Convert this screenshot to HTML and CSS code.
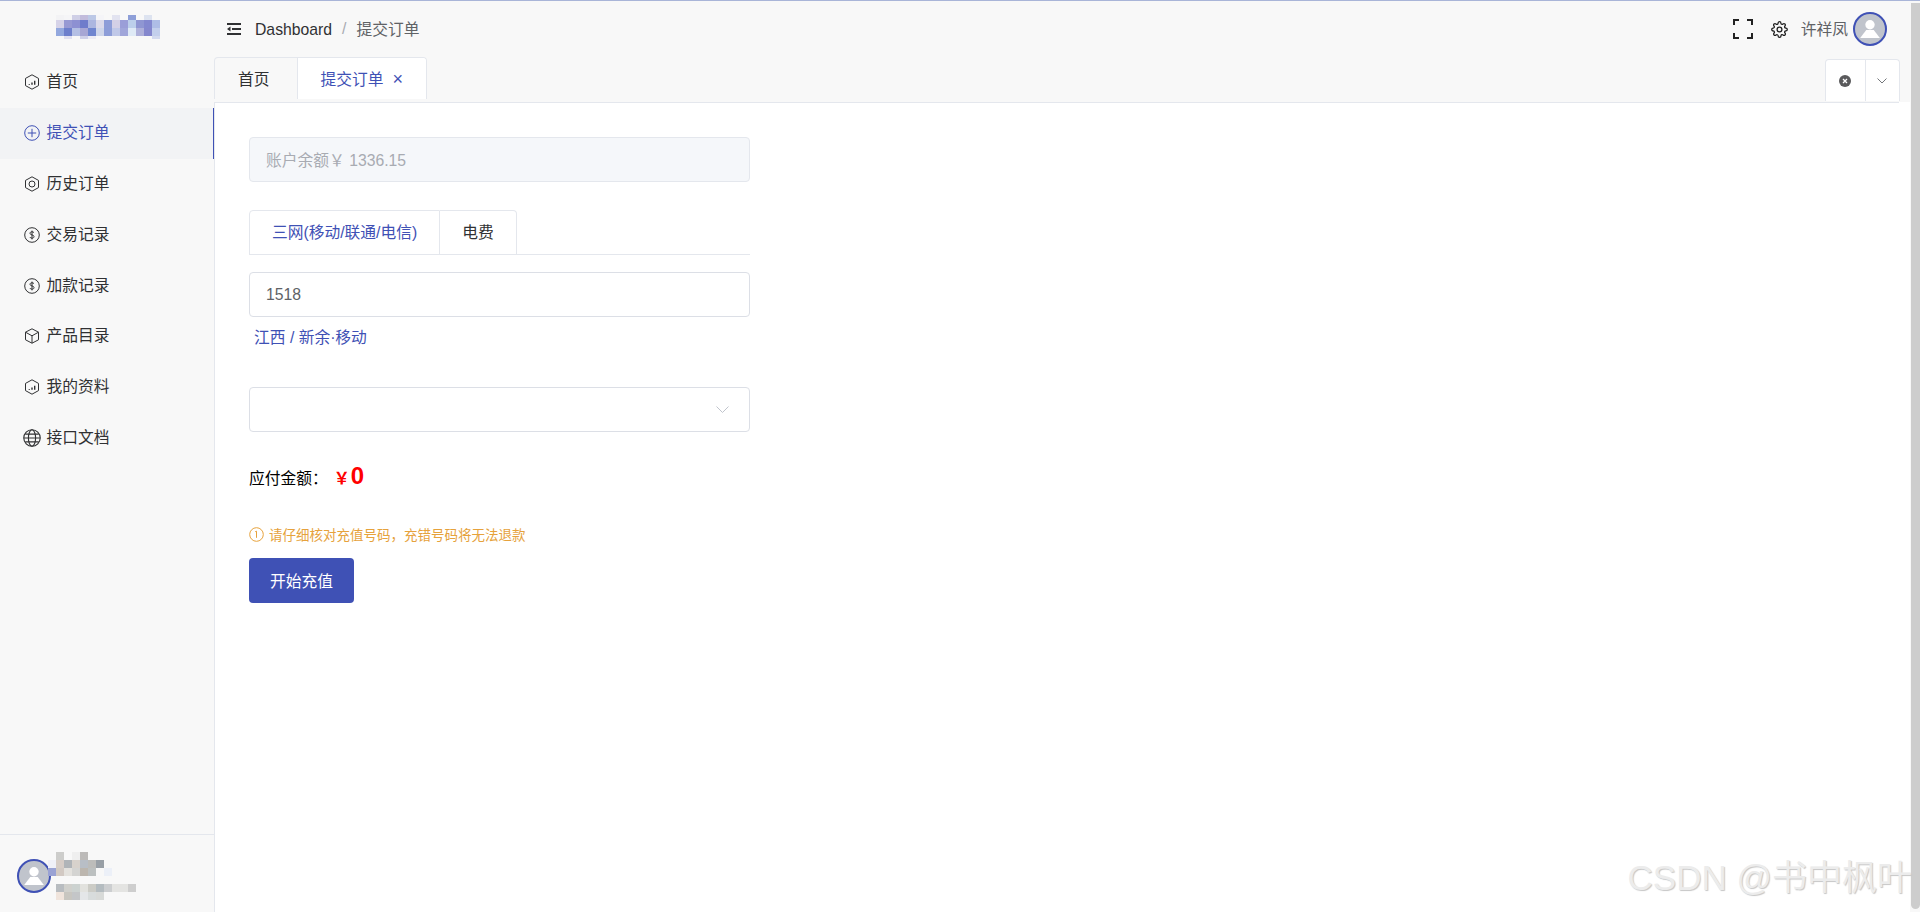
FILE: index.html
```html
<!DOCTYPE html>
<html lang="zh-CN">
<head>
  <meta charset="UTF-8" />
  <meta name="viewport" content="width=device-width, initial-scale=1.0" />
  <title>提交订单</title>
  <link rel="stylesheet" href="styles.css">
</head>
<body>
  <div class="layout">
    <!-- Sidebar -->
    <aside class="sidebar">
      <div class="logo">
        <svg width="104" height="24" viewBox="0 0 104 24">
          <rect x="0" y="0" width="8" height="5" fill="#f3f3f5"/><rect x="8" y="0" width="8" height="5" fill="#f5f5f7"/><rect x="16" y="0" width="8" height="5" fill="#cfcfe6"/><rect x="24" y="0" width="8" height="5" fill="#c2bcdc"/><rect x="32" y="0" width="8" height="5" fill="#bcc8e6"/><rect x="40" y="0" width="8" height="5" fill="#f5f5f8"/><rect x="56" y="0" width="8" height="5" fill="#e2e3f0"/><rect x="72" y="0" width="8" height="5" fill="#8e9fd8"/><rect x="88" y="0" width="8" height="5" fill="#dde3f0"/>
          <rect x="0" y="5" width="8" height="8" fill="#d6d3e8"/><rect x="8" y="5" width="8" height="8" fill="#9799d3"/><rect x="16" y="5" width="8" height="8" fill="#8d90d2"/><rect x="24" y="5" width="8" height="8" fill="#6f7ccb"/><rect x="32" y="5" width="8" height="8" fill="#acb6e0"/><rect x="40" y="5" width="8" height="8" fill="#dcdaea"/><rect x="48" y="5" width="8" height="8" fill="#8e9dd8"/><rect x="56" y="5" width="8" height="8" fill="#d4d0e6"/><rect x="64" y="5" width="8" height="8" fill="#9a9ed8"/><rect x="72" y="5" width="8" height="8" fill="#bccfeb"/><rect x="80" y="5" width="8" height="8" fill="#8f96d2"/><rect x="88" y="5" width="8" height="8" fill="#8388cf"/><rect x="96" y="5" width="8" height="8" fill="#aebde6"/>
          <rect x="0" y="13" width="8" height="8" fill="#93a8de"/><rect x="8" y="13" width="8" height="8" fill="#6d7fcc"/><rect x="16" y="13" width="8" height="8" fill="#b4bfe4"/><rect x="24" y="13" width="8" height="8" fill="#a7a6d4"/><rect x="32" y="13" width="8" height="8" fill="#6f85cf"/><rect x="40" y="13" width="8" height="8" fill="#cfd6ea"/><rect x="48" y="13" width="8" height="8" fill="#8d9dd8"/><rect x="56" y="13" width="8" height="8" fill="#c0c8e8"/><rect x="64" y="13" width="8" height="8" fill="#a0a6da"/><rect x="72" y="13" width="8" height="8" fill="#dfeaf6"/><rect x="80" y="13" width="8" height="8" fill="#aeb0da"/><rect x="88" y="13" width="8" height="8" fill="#8487cd"/><rect x="96" y="13" width="8" height="8" fill="#c3cfec"/>
          <rect x="8" y="21" width="8" height="3" fill="#e0e0f0"/><rect x="24" y="21" width="8" height="3" fill="#cfd0e8"/><rect x="32" y="21" width="8" height="3" fill="#ecebf4"/><rect x="96" y="21" width="8" height="3" fill="#d3daef"/>
        </svg>
      </div>

      <nav class="menu">
        <a class="menu-item">
          <svg class="menu-icon" viewBox="0 0 16 16"><path d="M8 .8 14.500 4.400v7.200L8 15.200 1.500 11.600V4.400z"/><path class="bars" d="M5.300 10.800v-.8M8 10.800V8.400M10.700 10.800V6.800"/></svg>
          <span>首页</span>
        </a>
        <a class="menu-item active">
          <svg class="menu-icon" viewBox="0 0 16 16"><circle cx="8" cy="8" r="7.300"/><path d="M8 3.800v8.400M3.800 8h8.400"/></svg>
          <span>提交订单</span>
        </a>
        <a class="menu-item">
          <svg class="menu-icon" viewBox="0 0 16 16"><path d="M8 .8 14.500 4.400v7.200L8 15.200 1.500 11.600V4.400z"/><circle cx="8" cy="8" r="3"/></svg>
          <span>历史订单</span>
        </a>
        <a class="menu-item">
          <svg class="menu-icon" viewBox="0 0 16 16"><circle cx="8" cy="8" r="7.300"/><path d="M10 5.800C9.600 5 8.900 4.800 8 4.800c-1.100 0-2 .5-2 1.500 0 2.200 4 1 4 3.300 0 1-.9 1.600-2 1.600-1 0-1.700-.3-2.100-1.100M8 3.600v8.800"/></svg>
          <span>交易记录</span>
        </a>
        <a class="menu-item">
          <svg class="menu-icon" viewBox="0 0 16 16"><circle cx="8" cy="8" r="7.300"/><path d="M10 5.800C9.600 5 8.900 4.800 8 4.800c-1.100 0-2 .5-2 1.500 0 2.200 4 1 4 3.300 0 1-.9 1.600-2 1.600-1 0-1.700-.3-2.100-1.100M8 3.600v8.800"/></svg>
          <span>加款记录</span>
        </a>
        <a class="menu-item">
          <svg class="menu-icon" viewBox="0 0 16 16"><path d="M8 .8 14.500 4.200v7.600L8 15.200 1.500 11.800V4.200z"/><path d="M1.500 4.200 8 7.800l6.500-3.600M8 7.800v7.400"/></svg>
          <span>产品目录</span>
        </a>
        <a class="menu-item">
          <svg class="menu-icon" viewBox="0 0 16 16"><path d="M8 .8 14.500 4.400v7.200L8 15.200 1.500 11.600V4.400z"/><path class="bars" d="M5.300 10.800v-.8M8 10.800V8.400M10.700 10.800V6.800"/></svg>
          <span>我的资料</span>
        </a>
        <a class="menu-item">
          <svg class="menu-icon globe" viewBox="0 0 16 16"><circle cx="8" cy="8" r="7.300"/><ellipse cx="8" cy="8" rx="3.200" ry="7.300"/><path d="M.7 8h14.600M2 4.600h12M2 11.400h12"/></svg>
          <span>接口文档</span>
        </a>
      </nav>

      <div class="user-box">
        <div class="avatar">
          <svg viewBox="0 0 32 32"><circle cx="16" cy="11.500" r="5"/><path d="M12 17h8l6.500 8.500h-21z"/></svg>
        </div>
        <svg class="user-blur" width="88" height="48" viewBox="0 0 88 48">
          <rect x="8" y="0" width="8" height="8" fill="#cdcdcb"/><rect x="24" y="0" width="8" height="8" fill="#efefef"/><rect x="32" y="0" width="8" height="8" fill="#bcbab8"/>
          <rect x="0" y="8" width="8" height="8" fill="#f0f0f8"/><rect x="8" y="8" width="8" height="8" fill="#d6ccc6"/><rect x="16" y="8" width="8" height="8" fill="#b0b4b8"/><rect x="24" y="8" width="8" height="8" fill="#d8d2cc"/><rect x="32" y="8" width="8" height="8" fill="#b8bec6"/><rect x="40" y="8" width="8" height="8" fill="#bcbcba"/><rect x="48" y="8" width="8" height="8" fill="#989fa6"/>
          <rect x="0" y="16" width="8" height="8" fill="#9aa2d4"/><rect x="8" y="16" width="8" height="8" fill="#d2c9c3"/><rect x="16" y="16" width="8" height="8" fill="#e4e2de"/><rect x="24" y="16" width="8" height="8" fill="#d4d4d2"/><rect x="32" y="16" width="8" height="8" fill="#bcb6ae"/><rect x="40" y="16" width="8" height="8" fill="#bcc0c0"/><rect x="56" y="16" width="8" height="8" fill="#ecf0f8"/>
          <rect x="8" y="32" width="8" height="8" fill="#b8bcc0"/><rect x="16" y="32" width="8" height="8" fill="#d0d0cc"/><rect x="24" y="32" width="8" height="8" fill="#ccd2d0"/><rect x="32" y="32" width="8" height="8" fill="#e2e2de"/><rect x="40" y="32" width="8" height="8" fill="#ccccc6"/><rect x="48" y="32" width="8" height="8" fill="#b4bcc0"/><rect x="56" y="32" width="8" height="8" fill="#ccced0"/><rect x="64" y="32" width="8" height="8" fill="#e4e4e2"/><rect x="72" y="32" width="8" height="8" fill="#e4e4e2"/><rect x="80" y="32" width="8" height="8" fill="#cecece"/>
          <rect x="8" y="40" width="8" height="8" fill="#f0e4dc"/><rect x="16" y="40" width="8" height="8" fill="#c8c6c0"/><rect x="24" y="40" width="8" height="8" fill="#c4c6c8"/><rect x="32" y="40" width="8" height="8" fill="#e4e6e8"/><rect x="40" y="40" width="8" height="8" fill="#d8dcdc"/><rect x="48" y="40" width="8" height="8" fill="#d8dad8"/>
        </svg>
      </div>
    </aside>

    <main class="main">
      <!-- Top bar -->
      <header class="topbar">
        <div class="crumbs">
          <svg class="fold-icon" width="14" height="12" viewBox="0 0 14 12"><path d="M0 1h14M5 6h9M0 11h14"/><path class="fold-arrow" d="M3.500 3.600 0 6l3.500 2.400z"/></svg>
          <span class="crumb-first">Dashboard</span>
          <span class="crumb-sep">/</span>
          <span class="crumb-last">提交订单</span>
        </div>
        <div class="top-tools">
          <svg class="tool-full" width="20" height="20" viewBox="0 0 20 20"><path d="M1 6V1h5M14 1h5v5M19 14v5h-5M6 19H1v-5"/></svg>
          <svg class="tool-gear" width="17" height="17" viewBox="0 0 24 24"><circle cx="12" cy="12" r="3.400"/><path d="M19.400 15a1.650 1.650 0 0 0 .33 1.820l.06.06a2 2 0 0 1 0 2.830 2 2 0 0 1-2.830 0l-.06-.06a1.650 1.650 0 0 0-1.820-.33 1.650 1.650 0 0 0-1 1.510V21a2 2 0 0 1-2 2 2 2 0 0 1-2-2v-.09A1.650 1.650 0 0 0 9 19.400a1.650 1.650 0 0 0-1.820.33l-.06.06a2 2 0 0 1-2.830 0 2 2 0 0 1 0-2.830l.06-.06a1.650 1.650 0 0 0 .33-1.820 1.650 1.650 0 0 0-1.510-1H3a2 2 0 0 1-2-2 2 2 0 0 1 2-2h.09A1.650 1.650 0 0 0 4.600 9a1.650 1.650 0 0 0-.33-1.820l-.06-.06a2 2 0 0 1 0-2.830 2 2 0 0 1 2.830 0l.06.06a1.650 1.650 0 0 0 1.820.33H9a1.650 1.650 0 0 0 1-1.510V3a2 2 0 0 1 2-2 2 2 0 0 1 2 2v.09a1.650 1.650 0 0 0 1 1.510 1.650 1.650 0 0 0 1.820-.33l.06-.06a2 2 0 0 1 2.830 0 2 2 0 0 1 0 2.830l-.06.06a1.650 1.650 0 0 0-.33 1.820V9a1.650 1.650 0 0 0 1.510 1H21a2 2 0 0 1 2 2 2 2 0 0 1-2 2h-.09a1.650 1.650 0 0 0-1.510 1z"/></svg>
          <span class="top-name">许祥凤</span>
          <div class="avatar">
            <svg viewBox="0 0 32 32"><circle cx="16" cy="11.500" r="5"/><path d="M12 17h8l6.500 8.500h-21z"/></svg>
          </div>
        </div>
      </header>

      <!-- Page tabs -->
      <div class="page-tabs">
        <div class="tab-list">
          <div class="page-tab">首页</div>
          <div class="page-tab current">提交订单<span class="tab-close">×</span></div>
        </div>
        <div class="tab-actions">
          <div class="tab-action">
            <svg width="12" height="12" viewBox="0 0 12 12"><circle cx="6" cy="6" r="6" fill="#5a5a5c"/><path d="M4 4l4 4M8 4l-4 4" stroke="#fff" stroke-width="1.300"/></svg>
          </div>
          <div class="tab-action">
            <svg width="10" height="6" viewBox="0 0 10 6"><path d="M.5.5 5 5 9.500.5" fill="none" stroke="#73767a"/></svg>
          </div>
        </div>
      </div>

      <!-- Order form -->
      <section class="content">
        <div class="order-form">
          <input class="field balance" type="text" value="账户余额￥ 1336.15" disabled>

          <div class="type-tabs">
            <div class="type-tab selected">三网(移动/联通/电信)</div>
            <div class="type-tab">电费</div>
          </div>

          <input class="field phone" type="text" value="1518">
          <p class="location">江西 / 新余·移动</p>

          <div class="field select">
            <svg width="13" height="7" viewBox="0 0 13 7"><path d="M.5.5 6.500 6.500l6-6" fill="none" stroke="#c0c4cc"/></svg>
          </div>

          <div class="amount">
            <span>应付金额：</span>
            <span class="price"><small>￥</small>0</span>
          </div>

          <p class="notice">
            <svg width="15" height="15" viewBox="0 0 15 15"><circle cx="7.500" cy="7.500" r="6.800"/><path d="M6.200 4.700 7.500 4.200v6.600"/></svg>
            请仔细核对充值号码，充错号码将无法退款
          </p>

          <button class="submit-btn">开始充值</button>
        </div>
      </section>
    </main>

    <div class="scrollbar"><div class="scroll-thumb"></div></div>
  </div>

  <div class="watermark">CSDN @书中枫叶</div>
</body>
</html>
```

FILE: styles.css
```css
* {
  box-sizing: border-box;
}
html, body {
  height: 100%;
}
body {
  margin: 0;
  overflow: hidden;
  background: #f8f8f8;
  border-top: 1px solid #a9b5d8;
  font-family: "Liberation Sans", "Noto Sans CJK SC", sans-serif;
  font-size: 15.75px;
  color: #303133;
}
.layout {
  display: flex;
  height: 100%;
}

/* sidebar */
.sidebar {
  width: 214px;
  flex-shrink: 0;
  display: flex;
  flex-direction: column;
}
.logo {
  height: 56px;
  padding: 14px 0 0 56px;
}
.logo svg {
  display: block;
}
.menu-item {
  height: 50.8px;
  display: flex;
  align-items: center;
  gap: 7px;
  padding-left: 23.5px;
  color: #303133;
}
.menu-item span {
  margin-top: -3px;
}
.menu-item.active {
  background: #f2f3f5;
  border-right: 1px solid #3f51b5;
  color: #3f51b5;
}
.menu-icon {
  width: 16px;
  height: 16px;
  fill: none;
  stroke: currentColor;
  stroke-width: 1;
}
.menu-icon .bars {
  stroke-width: 1.4;
}
.menu-icon.globe {
  width: 18px;
  height: 18px;
  margin: 0 -1px;
}
.user-box {
  margin-top: auto;
  height: 78px;
  border-top: 1px solid #e4e7ed;
  display: flex;
  align-items: flex-start;
  padding: 24px 0 0 17px;
}
.user-box .avatar {
  flex-shrink: 0;
}
.user-blur {
  margin: -7px 0 0 -3px;
}
.avatar {
  width: 34px;
  height: 34px;
  border: 2px solid #3f51b5;
  border-radius: 50%;
  background: #c0c4cc;
  overflow: hidden;
}
.avatar svg {
  display: block;
  width: 100%;
  height: 100%;
  fill: #fff;
}

/* top bar */
.main {
  flex: 1;
  min-width: 0;
  display: flex;
  flex-direction: column;
}
.topbar {
  height: 56px;
  flex-shrink: 0;
  display: flex;
  justify-content: space-between;
  align-items: center;
  padding: 0 24px 0 13px;
}
.crumbs {
  display: flex;
  align-items: center;
}
.fold-icon {
  stroke: #303133;
  stroke-width: 2;
  margin-right: 14px;
}
.fold-arrow {
  fill: #303133;
  stroke: none;
}
.crumb-first {
  margin-top: 1px;
}
.crumb-sep {
  margin: -1px 10px 0;
  color: #a8abb2;
}
.crumb-last {
  margin-top: -2px;
  color: #606266;
}
.top-tools {
  display: flex;
  align-items: center;
}
.tool-full {
  fill: none;
  stroke: #222;
  stroke-width: 2;
  margin-right: 18px;
}
.tool-gear {
  fill: none;
  stroke: #222;
  stroke-width: 1.8;
  margin-right: 13px;
}
.top-name {
  margin-top: -2px;
  color: #606266;
  margin-right: 5px;
}

/* page tabs */
.page-tabs {
  height: 45px;
  flex-shrink: 0;
  display: flex;
  justify-content: space-between;
  align-items: flex-start;
  margin-right: 11px;
}
.tab-list {
  display: flex;
  height: 42px;
  border: 1px solid #e4e7ed;
  border-bottom: none;
  border-radius: 4px 4px 0 0;
  overflow: hidden;
}
.page-tab {
  padding: 0 23px;
  line-height: 43px;
  color: #303133;
}
.page-tab:first-child {
  padding-right: 27px;
}
.page-tab.current {
  background: #fff;
  border-left: 1px solid #e4e7ed;
  color: #3f51b5;
}
.tab-close {
  margin-left: 9px;
  font-size: 18px;
}
.tab-actions {
  display: flex;
  height: 42px;
  margin-top: 2px;
  background: #fff;
  border: 1px solid #e4e7ed;
  border-bottom: none;
  border-radius: 4px 4px 0 0;
}
.tab-action {
  width: 39px;
  padding-right: 2px;
  display: flex;
  justify-content: center;
  align-items: center;
}
.tab-action + .tab-action {
  width: 34px;
  border-left: 1px solid #e4e7ed;
}

/* form */
.content {
  flex: 1;
  background: #fff;
  border: 1px solid #e4e7ed;
  border-bottom: none;
  margin-right: 11px;
  padding: 34px;
  position: relative;
}
.content::after {
  content: "";
  position: absolute;
  top: -1px;
  bottom: 0;
  left: 100%;
  width: 11px;
  background: #fff;
}
.order-form {
  width: 501px;
  display: flex;
  flex-direction: column;
}
.field {
  display: block;
  width: 100%;
  height: 45px;
  padding: 0 16px;
  border: 1px solid #dcdfe6;
  border-radius: 4px;
  background: #fff;
  font: inherit;
  color: #606266;
  outline: none;
}
.balance {
  background: #f5f7fa;
  border-color: #e4e7ed;
  color: #a8abb2;
}
.type-tabs {
  display: flex;
  height: 45px;
  margin-top: 28px;
  border-bottom: 1px solid #e4e7ed;
}
.type-tab {
  height: 45px;
  padding: 0 22px;
  line-height: 43px;
  border: 1px solid #e4e7ed;
  border-left: none;
  color: #303133;
}
.type-tab:first-child {
  border-left: 1px solid #e4e7ed;
  border-radius: 4px 0 0 0;
}
.type-tab:last-child {
  border-radius: 0 4px 0 0;
}
.type-tab.selected {
  color: #3f51b5;
  border-bottom-color: #e4e7ed;
}
.phone {
  margin-top: 17px;
}
.location {
  margin: 10px 0 0;
  padding-left: 5px;
  line-height: 22px;
  color: #3f51b5;
}
.select {
  margin-top: 38px;
  display: flex;
  justify-content: flex-end;
  align-items: center;
  padding-right: 20px;
}
.amount {
  margin-top: 31px;
  height: 28px;
  display: flex;
  align-items: center;
  color: #000;
}
.price {
  color: #f00;
  font-weight: 700;
  font-size: 24px;
  margin: -2px 0 0 6px;
}
.price small {
  font-size: 16px;
  margin-right: 1px;
}
.notice {
  margin: 33px 0 0;
  display: flex;
  align-items: center;
  gap: 5px;
  height: 20px;
  font-size: 13.5px;
  color: #e6a23c;
}
.notice svg {
  fill: none;
  stroke: #e6a23c;
  stroke-width: 1;
}
.submit-btn {
  margin-top: 14px;
  width: 105px;
  height: 45px;
  border: none;
  border-radius: 4px;
  background: #3f51b5;
  color: #fff;
  font: inherit;
  cursor: pointer;
}

/* scrollbar and watermark */
.scrollbar {
  width: 9px;
  flex-shrink: 0;
  padding: 2px 0 3px;
}
.scroll-thumb {
  height: 100%;
  background: #cdcdcd;
  border-radius: 0 0 5px 5px;
}
.watermark {
  position: absolute;
  right: 8px;
  bottom: 14px;
  font-size: 35px;
  line-height: 40px;
  color: #ececec;
  text-shadow: 1px 1px 1px #c6c6c6;
  white-space: nowrap;
}
```
